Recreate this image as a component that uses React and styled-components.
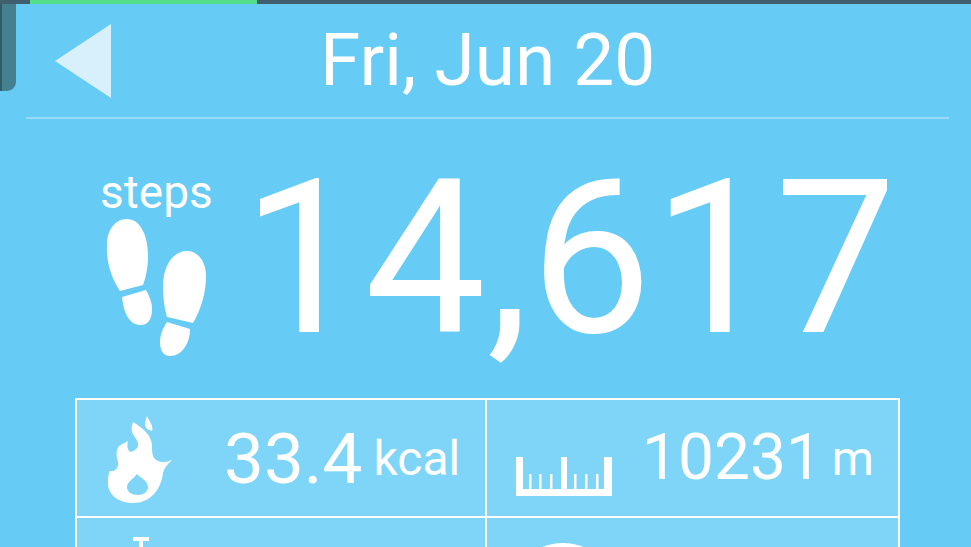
import React from 'react'
import styled, { createGlobalStyle } from 'styled-components'

const GlobalStyle = createGlobalStyle`
  html, body {
    margin: 0;
    padding: 0;
    height: 100%;
    overflow: hidden;
    background: #66CBF5;
  }
`
const Screen = styled.div`
  position: relative;
  width: 971px;
  height: 547px;
  overflow: hidden;
  background: #66CBF5;
  font-family: Roboto, "Liberation Sans", sans-serif;
  color: #fff;
`
const StatusBar = styled.div`
  height: 4px;
  padding-left: 30px;
  background: #3F5F6E;
`
const Progress = styled.div`
  width: 227px;
  height: 100%;
  background: #52DE8A;
`
const SideTab = styled.div`
  position: absolute;
  top: 4px;
  left: 0;
  width: 16px;
  height: 87px;
  box-sizing: border-box;
  border-left: 2px solid #2F5A66;
  border-radius: 0 0 9px 0;
  background: #44808F;
`
const Header = styled.header`
  display: flex;
  align-items: center;
  height: 115px;
  margin: 0 22px 0 26px;
  border-bottom: 2px solid #97DBF8;
  box-sizing: border-box;
`
const BackArrow = styled.svg`
  display: block;
  flex: none;
  width: 56px;
  height: 74px;
  margin: 0 0 0 29px;
`
const Title = styled.h1`
  margin: -2px 0 0 209px;
  font-size: 73px;
  font-weight: 400;
  line-height: 84px;
  white-space: nowrap;
`
const StepsRow = styled.section`
  display: flex;
  height: 279px;
  padding-left: 100px;
`
const StepsLabel = styled.div`
  display: flex;
  flex-direction: column;
  width: 142px;
  padding-top: 46px;
  font-size: 46px;
  line-height: 54px;
`
const FeetIcon = styled.svg`
  display: block;
  width: 102px;
  height: 138px;
  margin: 0 0 0 6px;
`
const StepCount = styled.div`
  margin-top: 12px;
  font-size: 216px;
  font-weight: 400;
  line-height: 256px;
  letter-spacing: 1px;
  white-space: nowrap;
`
const Stats = styled.section`
  display: grid;
  grid-template-columns: 412px 413px;
  grid-auto-rows: 120px;
  width: 825px;
  margin-left: 75px;
`
const StatCell = styled.div`
  display: flex;
  box-sizing: border-box;
  align-items: center;
  padding-left: ${(p) => p.$pad}px;
  border: 2px solid #fff;
  border-left-width: ${(p) => (p.$right ? 0 : 2)}px;
  border-top-width: ${(p) => (p.$lower ? 0 : 2)}px;
  background: #7FD5F7;
`
const Value = styled.span`
  margin-left: ${(p) => p.$gap}px;
  margin-top: ${(p) => p.$shift}px;
  font-size: ${(p) => p.$size}px;
  font-weight: 400;
  line-height: 78px;
  white-space: nowrap;
`
const Unit = styled.span`
  margin-left: ${(p) => p.$gap}px;
  margin-top: ${(p) => p.$shift}px;
  font-size: 48px;
  font-weight: 400;
  line-height: 54px;
  white-space: nowrap;
`
const Icon = styled.svg`
  display: block;
  flex: none;
  width: ${(p) => p.$w}px;
  height: ${(p) => p.$h}px;
  margin-top: ${(p) => p.$shift || 0}px;
`

function Feet() {
  return (
    <FeetIcon viewBox="0 0 102 138" fill="#fff">
      <path d="M21 0C34 0 42 16 42 37C42 48 40 58 37 66L14 72C6 60 0 44 1 26C1 11 9 0 21 0Z" />
      <path d="M16 78L40 71C44 78 46 84 46 90C46 100 42 106 35 106C24 106 18 96 16 78Z" />
      <path d="M81 32C93 32 100 44 100 57C100 74 95 90 87 104L61 98C58 88 57 78 57 67C57 47 67 32 81 32Z" />
      <path d="M61 103L84 110C84 124 76 137 64 137C57 137 54 131 54 123C54 116 57 109 61 103Z" />
    </FeetIcon>
  )
}

function Flame() {
  return (
    <Icon $w={65} $h={87} $shift={3} viewBox="0 0 65 87">
      <path
        fill="#fff"
        d="M39 0C41 5 46 10 44 15C40 14 37 12 37 8C37 5 38 3 39 0ZM25 6C35 12 44 20 44 30C44 37 44 42 50 45C54 47 59 46 64 44C59 49 56 52 55 57C53 74 42 87 25 87C9 87 0 77 0 68C0 62 0 58 2 55C7 56 11 52 10 46C8 40 8 34 11 30C14 28 17 27 20 25C19 29 19 33 22 36C27 35 31 32 30 27C29 23 26 21 24 16C23 13 24 9 25 6Z"
      />
      <path fill="#7FD5F7" d="M29 58C33 62 40 65 40 71C40 76 35 79 30 79C24 79 19 76 19 71C19 66 25 63 29 58Z" />
    </Icon>
  )
}

function Ruler() {
  return (
    <Icon $w={96} $h={39} $shift={37} viewBox="0 0 96 39" fill="#fff">
      <path d="M0 0H7V32H13V17H15.5V32H23V17H25.5V32H34V17H36.5V32H45V0H51V32H58V17H60.5V32H69V17H71.5V32H80V17H82.5V32H88V0H96V39H0Z" />
    </Icon>
  )
}

export default function App() {
  return (
    <Screen>
      <GlobalStyle />
      <StatusBar>
        <Progress />
      </StatusBar>
      <SideTab />
      <Header>
        <BackArrow viewBox="0 0 56 74">
          <polygon points="0,37 56,0 56,74" fill="#D8F0FC" />
        </BackArrow>
        <Title>Fri, Jun 20</Title>
      </Header>
      <StepsRow>
        <StepsLabel>
          steps
          <Feet />
        </StepsLabel>
        <StepCount>14,617</StepCount>
      </StepsRow>
      <Stats>
        <StatCell $pad={31}>
          <Flame />
          <Value $size={71} $gap={51} $shift={2}>33.4</Value>
          <Unit $gap={11} $shift={2}>kcal</Unit>
        </StatCell>
        <StatCell $right $pad={29}>
          <Ruler />
          <Value $size={64} $gap={30} $shift={0}>10231</Value>
          <Unit $gap={10} $shift={2}>m</Unit>
        </StatCell>
        <StatCell $lower $pad={31}>
          <Icon $w={66} $h={88} $shift={8} viewBox="0 0 66 88">
            <path fill="#fff" d="M25 0H41V4H35V60H31V4H25Z" />
          </Icon>
        </StatCell>
        <StatCell $lower $right $pad={21}>
          <Icon $w={110} $h={110} $shift={42} viewBox="0 0 110 110">
            <circle cx="55" cy="55" r="55" fill="#fff" />
          </Icon>
        </StatCell>
      </Stats>
    </Screen>
  )
}
